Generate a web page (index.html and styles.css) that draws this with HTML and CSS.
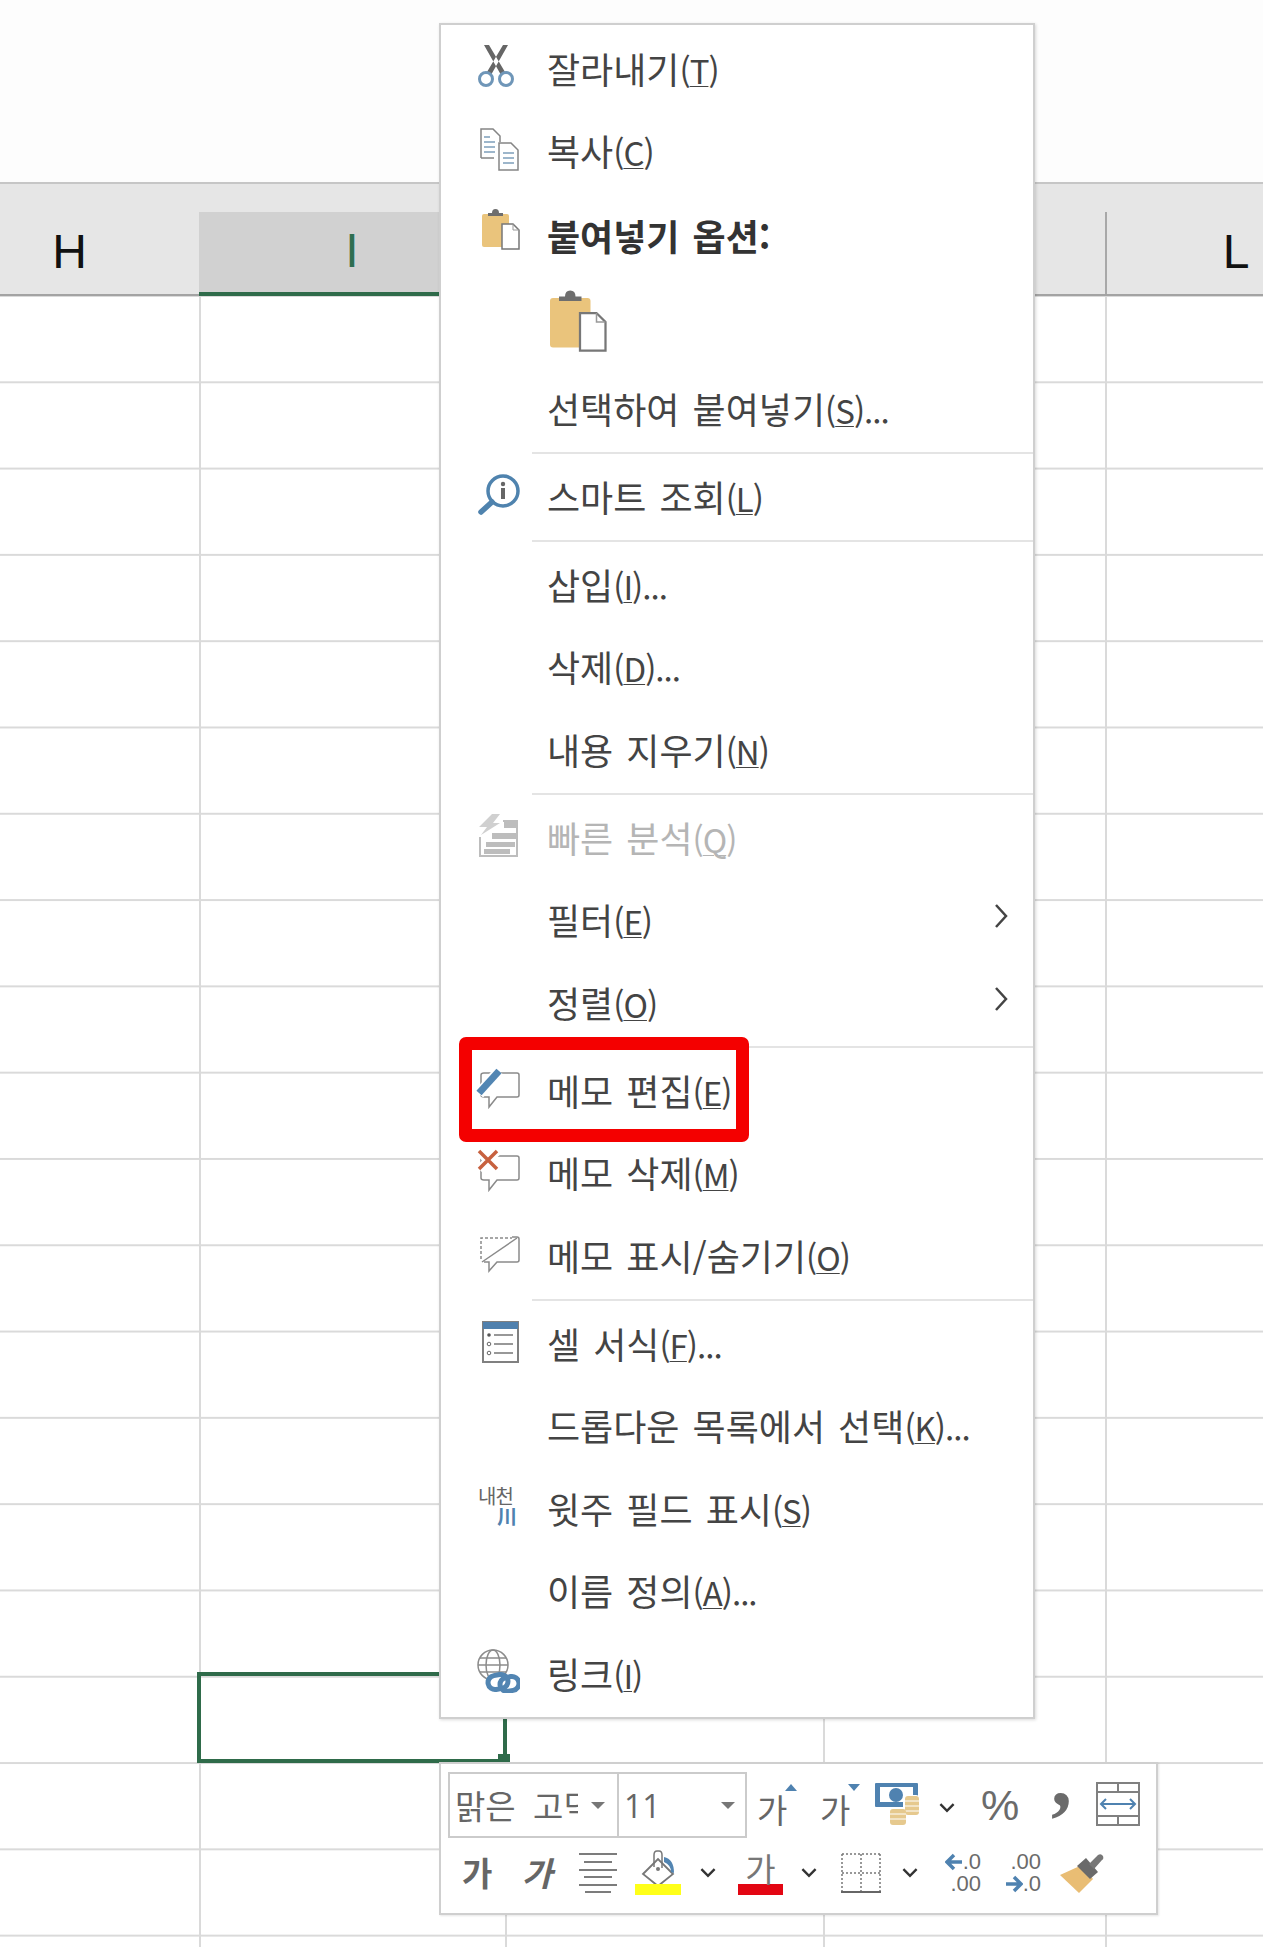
FILE: index.html
```html
<!DOCTYPE html>
<html lang="ko">
<head>
    <meta charset="UTF-8">
    <meta name="viewport" content="width=device-width, initial-scale=1.0">
    <title>메모 편집</title>
    <link rel="stylesheet" href="styles.css">
</head>
<body>

<svg class="defs" width="0" height="0">
    <symbol id="paste" viewBox="0 0 44 44">
        <rect x="6" y="8" width="27" height="33" rx="2" fill="#eac47c"/>
        <path d="M12 10 v-3 h4 q0-4 3.500-4 t3.500 4 h4 v3 z" fill="#6e6e6e"/>
        <path d="M26 18 h11 l6 6 v19 h-17 z" fill="#fff" stroke="#777" stroke-width="1.500"/>
        <path d="M37 18 v6 h6" fill="none" stroke="#999" stroke-width="1"/>
    </symbol>
    <symbol id="bubble" viewBox="0 0 44 44">
        <path d="M8 7 H41 q2 0 2 2 V29 q0 2 -2 2 H21 L13 41 V31 H8 q-3 0 -3 -2 V9 q0 -2 3 -2 z" fill="#fff" stroke="#8a8a8a" stroke-width="1.500"/>
    </symbol>
    <symbol id="chev" viewBox="0 0 16 10">
        <path d="M2 2 L8 8 L14 2" fill="none" stroke="#333" stroke-width="2.200"/>
    </symbol>
</svg>

<div class="sheet">
    <div class="top-strip"></div>

    <div class="col-head">
        <div class="hd hd-h">H</div>
        <div class="hd hd-i">I</div>
        <div class="hd hd-mid"></div>
        <div class="hd hd-k"></div>
        <div class="hd hd-l">L</div>
    </div>

    <div class="cells">
        <div class="col col-h"></div>
        <div class="col col-i"></div>
        <div class="col col-j"></div>
        <div class="col col-k"></div>
    </div>
</div>

<!-- selected cell, mostly behind the menu -->
<div class="cell-select"></div>
<div class="cell-handle"></div>

<!-- Context menu -->
<div class="menu">
    <div class="item">
        <span class="ico">
            <svg width="44" height="44" viewBox="0 0 44 44">
                <path d="M8 1 L13 1 L29 28 L25 31 z M32 1 L27 1 L11 28 L15 31 z" fill="#666"/>
                <circle cx="10" cy="35" r="6.500" fill="none" stroke="#6f96b8" stroke-width="3"/>
                <circle cx="30" cy="35" r="6.500" fill="none" stroke="#6f96b8" stroke-width="3"/>
            </svg>
        </span>
        <span class="label">잘라내기<span class="key">(<u>T</u>)</span></span>
    </div>
    <div class="item">
        <span class="ico">
            <svg width="44" height="44" viewBox="0 0 44 44">
                <path d="M5 31 V2 H17 L24 9 V15 M5 31 H18" fill="none" stroke="#858585" stroke-width="1.500"/>
                <path d="M8 10 H14 M8 15 H19 M8 20 H19 M8 25 H19" stroke="#7d9fbb" stroke-width="1.500"/>
                <path d="M23 16 H35 L42 23 V43 H23 z" fill="#fff" stroke="#858585" stroke-width="1.500"/>
                <path d="M27 26 H38 M27 31 H38 M27 36 H38" stroke="#7d9fbb" stroke-width="1.500"/>
            </svg>
        </span>
        <span class="label">복사<span class="key">(<u>C</u>)</span></span>
    </div>
    <div class="item item-head">
        <span class="ico ico-up">
            <svg width="44" height="44"><use href="#paste"/></svg>
        </span>
        <span class="label label-bold">붙여넣기 옵션:</span>
    </div>
    <div class="item item-paste">
        <span class="ico"></span>
        <svg class="paste-big" width="66" height="66"><use href="#paste"/></svg>
    </div>
    <div class="item">
        <span class="ico"></span>
        <span class="label">선택하여 붙여넣기<span class="key">(<u>S</u>)...</span></span>
    </div>
    <div class="sep"></div>
    <div class="item">
        <span class="ico">
            <svg width="44" height="44" viewBox="0 0 44 44">
                <circle cx="27" cy="19" r="15" fill="#fff" stroke="#4f83ae" stroke-width="3.500"/>
                <path d="M16 30 L5 40" stroke="#4f83ae" stroke-width="5.500" stroke-linecap="round"/>
                <circle cx="27" cy="12" r="2.200" fill="#666"/>
                <rect x="25" y="16" width="4" height="11" fill="#666"/>
            </svg>
        </span>
        <span class="label">스마트 조회<span class="key">(<u>L</u>)</span></span>
    </div>
    <div class="sep"></div>
    <div class="item">
        <span class="ico"></span>
        <span class="label">삽입<span class="key">(<u>I</u>)...</span></span>
    </div>
    <div class="item">
        <span class="ico"></span>
        <span class="label">삭제<span class="key">(<u>D</u>)...</span></span>
    </div>
    <div class="item">
        <span class="ico"></span>
        <span class="label">내용 지우기<span class="key">(<u>N</u>)</span></span>
    </div>
    <div class="sep"></div>
    <div class="item item-off">
        <span class="ico">
            <svg width="44" height="44" viewBox="0 0 44 44">
                <path d="M16 1 L3 14 H11 L5 22 L24 10 H17 L24 1 z" fill="#d0d0d0"/>
                <path d="M27 8 H41 V43 H4 V24" fill="none" stroke="#bdbdbd" stroke-width="2"/>
                <rect x="28" y="8" width="13" height="7" fill="#bdbdbd"/>
                <rect x="16" y="20" width="25" height="6" fill="#bdbdbd"/>
                <rect x="10" y="29" width="29" height="5" fill="#bdbdbd"/>
                <rect x="8" y="36" width="26" height="5" fill="#bdbdbd"/>
            </svg>
        </span>
        <span class="label">빠른 분석<span class="key">(<u>Q</u>)</span></span>
    </div>
    <div class="item">
        <span class="ico"></span>
        <span class="label">필터<span class="key">(<u>E</u>)</span></span>
        <svg class="sub" width="16" height="26" viewBox="0 0 16 26"><path d="M3 2 L13 13 L3 24" fill="none" stroke="#444" stroke-width="2.500"/></svg>
    </div>
    <div class="item">
        <span class="ico"></span>
        <span class="label">정렬<span class="key">(<u>O</u>)</span></span>
        <svg class="sub" width="16" height="26" viewBox="0 0 16 26"><path d="M3 2 L13 13 L3 24" fill="none" stroke="#444" stroke-width="2.500"/></svg>
    </div>
    <div class="sep"></div>
    <div class="item">
        <span class="ico">
            <svg width="44" height="44" viewBox="0 0 44 44">
                <use href="#bubble" width="44" height="44"/>
                <path d="M3 28 L23 5" stroke="#fff" stroke-width="11"/>
                <path d="M3 27 L23 5" stroke="#5286b3" stroke-width="7"/>
            </svg>
        </span>
        <span class="label">메모 편집<span class="key">(<u>E</u>)</span></span>
    </div>
    <div class="item">
        <span class="ico">
            <svg width="44" height="44" viewBox="0 0 44 44">
                <use href="#bubble" width="44" height="44"/>
                <path d="M3 3 L21 20 M21 3 L3 20" stroke="#fff" stroke-width="8"/>
                <path d="M3 2 L21 20 M21 2 L3 20" stroke="#c7613f" stroke-width="3.500"/>
            </svg>
        </span>
        <span class="label">메모 삭제<span class="key">(<u>M</u>)</span></span>
    </div>
    <div class="item">
        <span class="ico">
            <svg width="44" height="44" viewBox="0 0 44 44">
                <path d="M36 6 H41 q2 0 2 2 V29 q0 2 -2 2 H21 L13 40 V31 H8" fill="none" stroke="#8a8a8a" stroke-width="1.500"/>
                <path d="M5 28 V7 H36" fill="none" stroke="#8a8a8a" stroke-width="1.500" stroke-dasharray="3 2"/>
                <path d="M6 31 L41 7" stroke="#8a8a8a" stroke-width="1.500"/>
            </svg>
        </span>
        <span class="label">메모 표시/숨기기<span class="key">(<u>O</u>)</span></span>
    </div>
    <div class="sep"></div>
    <div class="item">
        <span class="ico">
            <svg width="44" height="44" viewBox="0 0 44 44">
                <rect x="7" y="3" width="35" height="40" fill="#fff" stroke="#808080" stroke-width="2"/>
                <rect x="7" y="3" width="35" height="7" fill="#4f80ad"/>
                <circle cx="13" cy="16" r="1.800" fill="#555"/>
                <circle cx="13" cy="25" r="1.800" fill="none" stroke="#666"/>
                <circle cx="13" cy="34" r="1.800" fill="none" stroke="#666"/>
                <path d="M18 16 H37 M18 25 H37 M18 34 H37" stroke="#777" stroke-width="1.500"/>
            </svg>
        </span>
        <span class="label">셀 서식<span class="key">(<u>F</u>)...</span></span>
    </div>
    <div class="item">
        <span class="ico"></span>
        <span class="label">드롭다운 목록에서 선택<span class="key">(<u>K</u>)...</span></span>
    </div>
    <div class="item">
        <span class="ico">
            <span class="phon">
                <span class="phon-top">내천</span>
                <span class="phon-low">川</span>
            </span>
        </span>
        <span class="label">윗주 필드 표시<span class="key">(<u>S</u>)</span></span>
    </div>
    <div class="item">
        <span class="ico"></span>
        <span class="label">이름 정의<span class="key">(<u>A</u>)...</span></span>
    </div>
    <div class="item">
        <span class="ico">
            <svg width="44" height="44" viewBox="0 0 44 44">
                <g fill="none" stroke="#8c8c8c" stroke-width="1.500">
                    <circle cx="17" cy="16" r="15"/>
                    <ellipse cx="17" cy="16" rx="7" ry="15"/>
                    <path d="M2 16 H32 M4 9 H30 M4 23 H30"/>
                </g>
                <g fill="#fff" stroke="#5285b2" stroke-width="5">
                    <rect x="12" y="26" width="20" height="14" rx="7" transform="rotate(-10 22 33)"/>
                    <rect x="24" y="28" width="19" height="14" rx="7" transform="rotate(-10 33 35)" fill="none"/>
                </g>
            </svg>
        </span>
        <span class="label">링크<span class="key">(<u>I</u>)</span></span>
    </div>
</div>

<div class="mark"></div>

<!-- Mini toolbar -->
<div class="mini">
    <div class="mini-row">
        <div class="box box-font">
            <span class="box-text">맑은 고딕</span>
            <span class="caret"></span>
        </div>
        <div class="box box-size">
            <span class="box-num">11</span>
            <span class="caret"></span>
        </div>
        <span class="ga ga-grow">가</span>
        <span class="ga ga-shrink">가</span>
        <svg class="t-money" width="44" height="42" viewBox="0 0 44 42">
            <rect x="0" y="0" width="43" height="24" rx="1" fill="#4f82b0"/>
            <path d="M5 4 H38 V19 H5 z" fill="#fff"/>
            <circle cx="21" cy="12" r="7" fill="#4f82b0"/>
            <rect x="28" y="12" width="16" height="21" rx="3" fill="#fff"/>
            <rect x="30" y="13" width="14" height="19" rx="3" fill="#e6c98e"/>
            <path d="M30 18 H44 M30 23 H44 M30 28 H44" stroke="#fff" stroke-width="1"/>
            <rect x="15" y="26" width="16" height="16" rx="3" fill="#e6c98e"/>
            <path d="M15 31 H31 M15 36 H31" stroke="#fff" stroke-width="1"/>
        </svg>
        <svg class="t-chev1" width="18" height="11"><use href="#chev"/></svg>
        <span class="t-pct">%</span>
        <span class="t-comma">,</span>
        <svg class="t-wrap" width="44" height="44" viewBox="0 0 44 44">
            <rect x="1" y="1" width="42" height="42" fill="none" stroke="#808080" stroke-width="2"/>
            <path d="M1 10 H43 M1 34 H43 M22 1 V10 M22 34 V43" stroke="#808080" stroke-width="2"/>
            <path d="M5 22 H39 M10 17 L5 22 L10 27 M34 17 L39 22 L34 27" fill="none" stroke="#4f82b0" stroke-width="2"/>
        </svg>
    </div>
    <div class="mini-row mini-row2">
        <span class="ga ga-bold">가</span>
        <span class="ga ga-italic">가</span>
        <svg class="t-align" width="38" height="40" viewBox="0 0 38 40">
            <path d="M0 1 H38 M5 9 H33 M0 17 H38 M5 24 H33 M0 32 H38 M6 39 H32" stroke="#7c7c7c" stroke-width="2"/>
        </svg>
        <svg class="t-fill" width="46" height="46" viewBox="0 0 46 46">
            <path d="M8 24 L23 9 L38 24 L23 36 z" fill="#fff" stroke="#777" stroke-width="1.800"/>
            <path d="M19 17 V5 q0 -4 3 -4 h2 q3 0 3 4 V18" fill="none" stroke="#777" stroke-width="1.500"/>
            <circle cx="23" cy="19" r="2" fill="#777"/>
            <path d="M29 7 q10 2 10 16 l-3 -1 q0 -7 -7 -10 z" fill="#5285b2"/>
            <rect x="0" y="34" width="46" height="11" fill="#ffff19"/>
        </svg>
        <svg class="t-chev2" width="18" height="11"><use href="#chev"/></svg>
        <span class="color-ga">가</span>
        <svg class="t-chev3" width="18" height="11"><use href="#chev"/></svg>
        <svg class="t-borders" width="40" height="40" viewBox="0 0 40 40">
            <path d="M1 1 H39 M1 20 H39 M1 1 V38 M20 1 V38 M39 1 V38" fill="none" stroke="#777" stroke-width="1.500" stroke-dasharray="2 2"/>
            <path d="M0 39 H40" stroke="#666" stroke-width="2"/>
        </svg>
        <svg class="t-chev4" width="18" height="11"><use href="#chev"/></svg>
        <span class="dec dec-less">
            <span class="dec-line">
                <svg width="18" height="18" viewBox="0 0 18 18"><path d="M9 2 L2 9 L9 16 M2 9 H17" fill="none" stroke="#4f82b0" stroke-width="3.500"/></svg>.0
            </span>
            <span class="dec-line">.00</span>
        </span>
        <span class="dec dec-more">
            <span class="dec-line">.00</span>
            <span class="dec-line">
                <svg width="18" height="18" viewBox="0 0 18 18"><path d="M9 2 L16 9 L9 16 M16 9 H1" fill="none" stroke="#4f82b0" stroke-width="3.500"/></svg>.0
            </span>
        </span>
        <svg class="t-brush" width="44" height="40" viewBox="0 0 44 40">
            <path d="M0 22 L22 12 L33 26 L19 40 z" fill="#e9bd74"/>
            <path d="M17 13 L26 5 L38 19 L30 26 z" fill="#6a6a6a"/>
            <path d="M29 11 L38 2 q3 -2 5 1 q1 3 -1 4 L34 16 z" fill="#777"/>
        </svg>
    </div>
</div>

</body>
</html>
```

FILE: styles.css
```css
* {
    box-sizing: border-box;
}

html, body {
    margin: 0;
    padding: 0;
}

body {
    width: 1263px;
    height: 1947px;
    position: relative;
    overflow: hidden;
    background-color: #fff;
    font-family: "Noto Sans CJK KR", "Liberation Sans", sans-serif;
    color: #444;
}

.defs {
    position: absolute;
}

/* Sheet behind the menu */
.top-strip {
    height: 182px;
    background-color: #fdfdfd;
}

.col-head {
    display: flex;
    height: 114px;
    background-color: #e6e6e6;
    border-top: 2px solid #c6c6c6;
    border-bottom: 2px solid #a3a3a3;
    font-family: "Liberation Sans", sans-serif;
    font-size: 48px;
    color: #111;
}

.hd {
    display: flex;
    align-items: center;
    justify-content: center;
    padding-top: 25px;
}

.hd-h {
    width: 199px;
    padding-right: 60px;
}

.hd-i {
    width: 306px;
    height: 112px;
    color: #2f6e50;
    background: linear-gradient(#e6e6e6 28px, #d1d1d1 28px);
    border-bottom: 4px solid #2f6b4a;
}

.hd-mid {
    width: 318px;
}

.hd-k {
    width: 282px;
}

.hd-l {
    flex: 1;
    padding-left: 104px;
    background: linear-gradient(90deg, #a8a8a8 2px, transparent 2px) no-repeat 0 28px;
}

.cells {
    display: flex;
    height: 1651px;
    background-image: linear-gradient(#dadada 2px, transparent 2px);
    background-size: 100% 86.3px;
    background-position: 0 -1px;
}

.col {
    border-right: 2px solid #dadada;
}

.col-h {
    width: 201px;
}

.col-i {
    width: 306px;
}

.col-j {
    width: 318px;
}

.col-k {
    width: 282px;
}

.cell-select {
    position: absolute;
    left: 197px;
    top: 1672px;
    width: 310px;
    height: 91px;
    border: 4px solid #2f6b4a;
}

.cell-handle {
    position: absolute;
    left: 498px;
    top: 1754px;
    width: 12px;
    height: 10px;
    background-color: #2f6b4a;
}

/* Context menu */
.menu {
    position: absolute;
    left: 439px;
    top: 23px;
    width: 596px;
    height: 1696px;
    padding-top: 4px;
    background-color: #fff;
    border: 2px solid #cfcfcf;
    box-shadow: 1px 1px 3px rgba(0, 0, 0, 0.15);
}

.item {
    display: flex;
    align-items: center;
    height: 82.5px;
    font-size: 36px;
    padding-left: 35px;
}

.item-head {
    height: 86px;
}

.item-paste {
    height: 89px;
}

.item-off {
    color: #b5b5b5;
}

.ico {
    display: flex;
    flex: none;
    width: 71px;
    margin-top: -8px;
}

.ico-up {
    margin-top: -18px;
}

.label {
    margin-top: -5px;
    white-space: nowrap;
    word-spacing: 3px;
}

.label-bold {
    font-weight: bold;
    color: #333;
}

.key {
    font-size: 33px;
    letter-spacing: -1px;
}

.paste-big {
    margin-left: -6px;
    margin-top: -12px;
}

.sub {
    margin-left: auto;
    margin-right: 24px;
    margin-top: -11px;
}

.sep {
    height: 2px;
    margin: 0 0 3.5px 91px;
    background-color: #e4e4e4;
}

.phon {
    display: flex;
    flex-direction: column;
    width: 44px;
    padding-left: 2px;
    line-height: 1;
}

.phon-top {
    font-size: 20px;
    color: #666;
    letter-spacing: -1px;
}

.phon-low {
    font-size: 20px;
    font-weight: bold;
    color: #4f82b0;
    margin-left: 19px;
}

/* Red box drawn on top of the screenshot */
.mark {
    position: absolute;
    left: 459px;
    top: 1037px;
    width: 290px;
    height: 105px;
    border: 13px solid #f40000;
    border-radius: 7px;
}

/* Mini toolbar */
.mini {
    position: absolute;
    left: 439px;
    top: 1762px;
    width: 719px;
    height: 153px;
    padding: 8px 0 0 7px;
    background-color: #fff;
    border: 2px solid #cfcfcf;
    box-shadow: 1px 1px 2px rgba(0, 0, 0, 0.1);
}

.mini-row {
    display: flex;
    align-items: center;
    height: 66px;
}

.mini-row2 {
    height: 45px;
    margin-top: 12px;
}

.box {
    display: flex;
    align-items: center;
    height: 66px;
    border: 2px solid #cbcbcb;
    color: #666;
}

.box-font {
    width: 171px;
    padding-left: 5px;
}

.box-size {
    width: 130px;
    margin-left: -2px;
    padding-left: 5px;
}

.box-text {
    width: 123px;
    overflow: hidden;
    white-space: nowrap;
    font-size: 33px;
    word-spacing: 8px;
}

.box-font .caret {
    margin-left: 13px;
}

.box-num {
    width: 92px;
    font-family: "Open Sans", sans-serif;
    font-size: 32px;
}

.caret {
    width: 0;
    height: 0;
    border-left: 7px solid transparent;
    border-right: 7px solid transparent;
    border-top: 7px solid #777;
    margin-left: 5px;
}

.ga {
    position: relative;
    line-height: 1;
    font-size: 33px;
    color: #666;
}

.ga-grow {
    margin-left: 10px;
    margin-top: 8px;
    width: 40px;
}

.ga-grow::after,
.ga-shrink::after {
    content: "";
    position: absolute;
    right: 0;
    top: -9px;
    border-left: 6px solid transparent;
    border-right: 6px solid transparent;
}

.ga-grow::after {
    border-bottom: 7px solid #4f82b0;
}

.ga-shrink::after {
    border-top: 7px solid #4f82b0;
}

.ga-shrink {
    margin-left: 23px;
    margin-top: 8px;
    width: 40px;
}

.t-money {
    margin-left: 15px;
    margin-top: -2px;
}

.t-chev1 {
    margin-left: 19px;
    margin-top: 4px;
}

.t-pct {
    margin-left: 25px;
    width: 38px;
    font-family: "Liberation Sans", sans-serif;
    font-size: 43px;
    line-height: 1;
    color: #6b6b6b;
}

.t-comma {
    margin-left: 32px;
    width: 15px;
    font-family: "Liberation Serif", serif;
    font-weight: bold;
    font-size: 84px;
    line-height: 40px;
    height: 40px;
    margin-top: -56px;
    color: #6b6b6b;
}

.t-wrap {
    margin-left: 30px;
    margin-top: -2px;
}

.ga-bold {
    margin-left: 14px;
    font-weight: bold;
    width: 31px;
}

.ga-italic {
    margin-left: 29px;
    font-weight: bold;
    font-style: italic;
    width: 33px;
}

.t-align {
    margin-left: 24px;
}

.t-fill {
    margin-left: 18px;
}

.t-chev2 {
    margin-left: 18px;
}

.color-ga {
    margin-left: 21px;
    width: 45px;
    height: 45px;
    font-size: 33px;
    line-height: 36px;
    text-align: center;
    color: #777;
    border-bottom: 11px solid #e30613;
}

.t-chev3 {
    margin-left: 17px;
}

.t-borders {
    margin-left: 23px;
}

.t-chev4 {
    margin-left: 20px;
}

.dec {
    display: flex;
    flex-direction: column;
    align-items: flex-end;
    width: 40px;
    font-family: "Liberation Sans", sans-serif;
    font-size: 22px;
    line-height: 22px;
    color: #6b6b6b;
}

.dec-line {
    display: flex;
    align-items: center;
}

.dec-less {
    margin-left: 22px;
}

.dec-more {
    margin-left: 20px;
}

.t-brush {
    margin-left: 19px;
}

u {
    text-underline-offset: 2px;
    text-decoration-thickness: 1px;
}
```
